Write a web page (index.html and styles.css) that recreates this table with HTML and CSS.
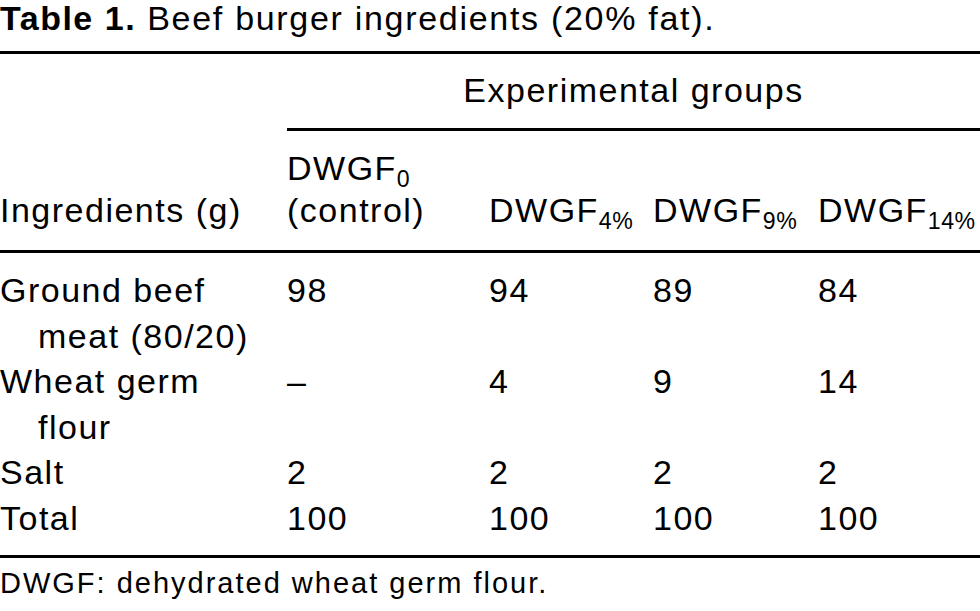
FILE: index.html
```html
<!DOCTYPE html>
<html lang="en">
<head>
<meta charset="utf-8">
<title>Table 1. Beef burger ingredients (20% fat).</title>
<link rel="stylesheet" href="styles.css">
</head>
<body>
<p class="caption"><b class="label">Table 1.</b> Beef burger ingredients (20% fat).</p>
<table class="data">
  <colgroup>
    <col class="c1"><col class="c2"><col class="c3"><col class="c4"><col class="c5">
  </colgroup>
  <thead>
    <tr class="h1">
      <th class="blank"></th>
      <th class="span" colspan="4">Experimental groups</th>
    </tr>
    <tr class="h2">
      <th>Ingredients (g)</th>
      <th>DWGF<sub>0</sub><br>(control)</th>
      <th>DWGF<sub>4%</sub></th>
      <th>DWGF<sub>9%</sub></th>
      <th>DWGF<sub>14%</sub></th>
    </tr>
  </thead>
  <tbody>
    <tr class="first">
      <td class="name">Ground beef meat (80/20)</td>
      <td>98</td><td>94</td><td>89</td><td>84</td>
    </tr>
    <tr>
      <td class="name">Wheat germ flour</td>
      <td>–</td><td>4</td><td>9</td><td>14</td>
    </tr>
    <tr>
      <td class="name">Salt</td>
      <td>2</td><td>2</td><td>2</td><td>2</td>
    </tr>
    <tr class="last">
      <td class="name">Total</td>
      <td>100</td><td>100</td><td>100</td><td>100</td>
    </tr>
  </tbody>
</table>
<p class="note">DWGF: dehydrated wheat germ flour.</p>
</body>
</html>
```
FILE: styles.css
```css
html, body {
  margin: 0;
  padding: 0;
  background: #fff;
  color: #000;
}
body {
  width: 980px;
  overflow: hidden;
  font-family: "Liberation Sans", Arial, Helvetica, sans-serif;
  font-size: 34px;
  letter-spacing: 1.5px;
}
.caption {
  margin: 0 0 15px 0;
  line-height: 36px;
  letter-spacing: 1.7px;
  white-space: nowrap;
}
.label {
  font-weight: bold;
  letter-spacing: 1.5px;
}
.data {
  width: 980px;
  border-collapse: separate;
  border-spacing: 0;
  table-layout: fixed;
  border-top: 3px solid #000;
  border-bottom: 3px solid #000;
}
.c1 { width: 287px; }
.c2 { width: 202px; }
.c3 { width: 164px; }
.c4 { width: 165px; }
.c5 { width: 162px; }
th, td {
  padding: 0;
  text-align: left;
  font-weight: normal;
  vertical-align: top;
  white-space: nowrap;
}
.h1 th {
  line-height: 42px;
  padding-top: 15px;
  padding-bottom: 17px;
}
.h1 .span {
  text-align: center;
  border-bottom: 3px solid #000;
}
.h2 th {
  line-height: 42px;
  padding-top: 16px;
  padding-bottom: 19px;
  vertical-align: bottom;
  border-bottom: 3px solid #000;
}
sub {
  font-size: 0.68em;
  line-height: 0;
  vertical-align: -0.3em;
  letter-spacing: 0.5px;
}
tbody td {
  line-height: 45.6px;
}
tbody .name {
  white-space: normal;
  padding-left: 38px;
  text-indent: -38px;
  padding-right: 20px;
}
tbody .first td {
  padding-top: 15px;
}
tbody .last td {
  padding-bottom: 13px;
}
.note {
  margin: 7px 0 0 0;
  font-size: 29px;
  line-height: 36px;
  letter-spacing: 2px;
  white-space: nowrap;
}
```
